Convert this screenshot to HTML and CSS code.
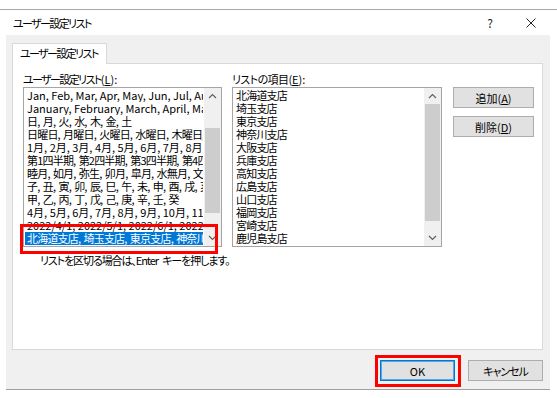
FILE: index.html
```html
<!DOCTYPE html>
<html lang="ja">
<head>
<meta charset="utf-8">
<title>ユーザー設定リスト</title>
<link rel="stylesheet" href="styles.css">
</head>
<body>
<div class="screen">
  <div class="topline"></div>
  <div class="dialog">
    <div class="titlebar">
      <span class="title">ユーザー設定リスト</span>
      <span class="help">?</span>
      <span class="close"><svg width="10" height="10" viewBox="0 0 10 10"><path d="M0.5 0.5 L9.5 9.5 M9.5 0.5 L0.5 9.5" stroke="#222" stroke-width="1" fill="none"/></svg></span>
    </div>
    <div class="client">
      <div class="tabs"><div class="tab">ユーザー設定リスト</div></div>
      <div class="panel">
        <div class="col col-left">
          <div class="label"><span class="kana">ユーザー設定リスト</span>(<u>L</u>):</div>
          <div class="listbox lb-left">
            <div class="items">
              <div class="row">Jan, Feb, Mar, Apr, May, Jun, Jul, Aug, Sep, Oct, Nov, Dec</div>
              <div class="row">January, February, March, April, May, June, July, August, September, October, November, December</div>
              <div class="row cjk">日, 月, 火, 水, 木, 金, 土</div>
              <div class="row cjk">日曜日, 月曜日, 火曜日, 水曜日, 木曜日, 金曜日, 土曜日</div>
              <div class="row">1月, 2月, 3月, 4月, 5月, 6月, 7月, 8月, 9月, 10月, 11月, 12月</div>
              <div class="row cjk">第1四半期, 第2四半期, 第3四半期, 第4四半期</div>
              <div class="row cjk">睦月, 如月, 弥生, 卯月, 皐月, 水無月, 文月, 葉月, 長月, 神無月, 霜月, 師走</div>
              <div class="row cjk">子, 丑, 寅, 卯, 辰, 巳, 午, 未, 申, 酉, 戌, 亥</div>
              <div class="row cjk">甲, 乙, 丙, 丁, 戊, 己, 庚, 辛, 壬, 癸</div>
              <div class="row">4月, 5月, 6月, 7月, 8月, 9月, 10月, 11月, 12月, 1月, 2月, 3月</div>
              <div class="row">2022/4/1, 2022/5/1, 2022/6/1, 2022/7/1, 2022/8/1</div>
              <div class="row cjk selected">北海道支店, 埼玉支店, 東京支店, 神奈川支店, 大阪支店, 兵庫支店</div>
            </div>
            <div class="vscroll">
              <div class="arrow"><svg width="9" height="6" viewBox="0 0 9 6"><path d="M1 5 L4.5 1.5 L8 5" stroke="#606060" stroke-width="1.2" fill="none"/></svg></div>
              <div class="track"><div class="thumb thumb-left"></div></div>
              <div class="arrow"><svg width="9" height="6" viewBox="0 0 9 6"><path d="M1 1 L4.5 4.5 L8 1" stroke="#606060" stroke-width="1.2" fill="none"/></svg></div>
            </div>
          </div>
          <div class="hint">リストを区切る場合は、Enter キーを押します。</div>
        </div>
        <div class="col col-right">
          <div class="label"><span class="kana-s">リストの項目</span>(<u>E</u>):</div>
          <div class="listbox lb-right">
            <div class="items">
              <div class="row cjk">北海道支店</div>
              <div class="row cjk">埼玉支店</div>
              <div class="row cjk">東京支店</div>
              <div class="row cjk">神奈川支店</div>
              <div class="row cjk">大阪支店</div>
              <div class="row cjk">兵庫支店</div>
              <div class="row cjk">高知支店</div>
              <div class="row cjk">広島支店</div>
              <div class="row cjk">山口支店</div>
              <div class="row cjk">福岡支店</div>
              <div class="row cjk">宮崎支店</div>
              <div class="row cjk">鹿児島支店</div>
            </div>
            <div class="vscroll">
              <div class="arrow"><svg width="9" height="6" viewBox="0 0 9 6"><path d="M1 5 L4.5 1.5 L8 5" stroke="#606060" stroke-width="1.2" fill="none"/></svg></div>
              <div class="track"><div class="thumb thumb-right"></div></div>
              <div class="arrow"><svg width="9" height="6" viewBox="0 0 9 6"><path d="M1 1 L4.5 4.5 L8 1" stroke="#606060" stroke-width="1.2" fill="none"/></svg></div>
            </div>
          </div>
        </div>
        <div class="col col-btns">
          <button class="btn side">追加(<u>A</u>)</button>
          <button class="btn side">削除(<u>D</u>)</button>
        </div>
      </div>
      <div class="footer">
        <button class="btn foot ok">OK</button>
        <button class="btn foot cancel">キャンセル</button>
      </div>
    </div>
  </div>
  <div class="mark mark-list"></div>
  <div class="mark mark-ok"></div>
</div>
</body>
</html>
```
FILE: styles.css
```css
* { box-sizing: border-box; }
html, body { margin: 0; padding: 0; background: #ffffff; }
body {
  font-family: "Noto Sans CJK JP", sans-serif;
  font-feature-settings: "palt";
  font-size: 11px;
  color: #000;
}
.screen {
  position: relative;
  width: 557px;
  height: 398px;
  overflow: hidden;
}
.topline {
  margin-top: 9px;
  height: 1px;
  background: #a7a7a7;
}
.dialog {
  margin-left: 6px;
  width: 544px;
}
.titlebar {
  height: 25px;
  display: flex;
  align-items: center;
  padding-left: 7px;
  background: #fff;
}
.title {
  font-size: 11px;
  line-height: 14px;
  white-space: nowrap;
  letter-spacing: -1.6px;
}
.help {
  margin-left: auto;
  width: 12px;
  text-align: center;
  font-size: 12px;
  color: #222;
}
.close {
  width: 10px;
  height: 10px;
  margin-left: 30px;
  margin-right: 14px;
  display: flex;
}
.client {
  background: #f0f0f0;
  height: 355px;
  border-bottom: 1px solid #a0a0a0;
  padding: 8px 7px 0 6px;
}
.tabs { display: flex; }
.tab {
  position: relative;
  z-index: 1;
  width: 95px;
  height: 21px;
  margin-bottom: -1px;
  background: #fff;
  border: 1px solid #d9d9d9;
  border-bottom: none;
  padding-left: 7px;
  line-height: 19px;
  white-space: nowrap;
  overflow: hidden;
  letter-spacing: -1.6px;
}
.panel {
  height: 287px;
  background: #fff;
  border: 1px solid #d9d9d9;
  padding: 8px 0 0 10px;
  display: flex;
  align-items: flex-start;
}
.col { display: flex; flex-direction: column; }
.col-left { width: 199px; }
.col-right { width: 210px; margin-left: 10px; }
.col-btns { width: 81px; margin-left: 11px; padding-top: 15px; gap: 8px; }
.label {
  height: 15px;
  line-height: 14px;
  white-space: nowrap;
}
.kana { letter-spacing: -1.6px; }
.kana-s { letter-spacing: -0.6px; }
.listbox {
  height: 160px;
  border: 1px solid #a5a5a5;
  display: flex;
  background: #fff;
}
.items {
  flex: 1;
  min-width: 0;
  padding: 1px;
  overflow: hidden;
}
.row {
  height: 13px;
  line-height: 13px;
  padding-left: 2px;
  white-space: nowrap;
  overflow: hidden;
}
.row.cjk { letter-spacing: -0.8px; word-spacing: 1.6px; }
.row.selected { background: #0078d7; color: #fff; }
.vscroll {
  width: 17px;
  display: flex;
  flex-direction: column;
  background: #f0f0f0;
}
.arrow {
  height: 16px;
  display: flex;
  align-items: center;
  justify-content: center;
}
.track { flex: 1; padding: 0 1px; }
.thumb { background: #cdcdcd; }
.thumb-left { margin-top: 24px; height: 85px; }
.thumb-right { margin-top: 0; height: 117px; }
.hint {
  margin-top: 6px;
  padding-left: 17px;
  line-height: 14px;
  white-space: nowrap;
  letter-spacing: -1.1px;
  word-spacing: 3px;
}
.btn {
  font-family: inherit;
  font-feature-settings: "palt";
  font-size: 11px;
  color: #000;
  background: #e1e1e1;
  border: 1px solid #adadad;
  height: 21px;
  padding: 0;
  margin: 0;
  line-height: 18px;
}
.btn.side { width: 81px; }
.footer {
  display: flex;
  justify-content: flex-end;
  gap: 13px;
  margin-top: 10px;
}
.btn.foot { width: 75px; }
.btn.cancel { letter-spacing: -1px; }
.btn.ok { border: 1px solid #0078d7; box-shadow: inset 0 0 0 1px #5aa3e6; }
.mark {
  position: absolute;
  border: 3px solid #f00;
}
.mark-list { left: 20px; top: 224px; width: 198px; height: 30px; }
.mark-ok { left: 375px; top: 355px; width: 86px; height: 32px; }
```
